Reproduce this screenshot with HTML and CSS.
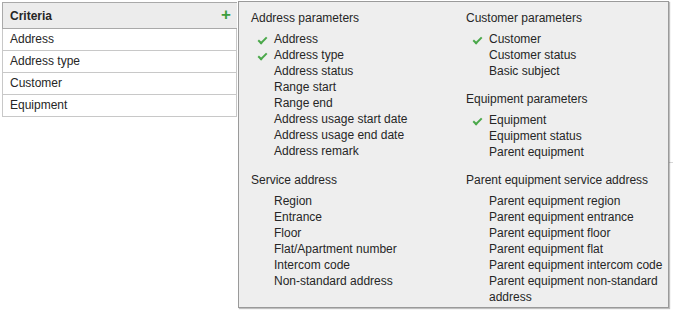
FILE: index.html
```html
<!DOCTYPE html>
<html lang="en">
<head>
  <title>Criteria</title>
  <link rel="stylesheet" href="styles.css">
</head>
<body>

<div class="criteria">
  <div class="criteria__head">
    <span>Criteria</span>
    <span class="add">+</span>
  </div>
  <ul class="criteria__list">
    <li>Address</li>
    <li>Address type</li>
    <li>Customer</li>
    <li>Equipment</li>
  </ul>
</div>

<div class="edge"></div>

<div class="picker">
  <div class="picker__col">
    <div class="group">
      <h3>Address parameters</h3>
      <ul>
        <li class="on">Address</li>
        <li class="on">Address type</li>
        <li>Address status</li>
        <li>Range start</li>
        <li>Range end</li>
        <li>Address usage start date</li>
        <li>Address usage end date</li>
        <li>Address remark</li>
      </ul>
    </div>
    <div class="group">
      <h3>Service address</h3>
      <ul>
        <li>Region</li>
        <li>Entrance</li>
        <li>Floor</li>
        <li>Flat/Apartment number</li>
        <li>Intercom code</li>
        <li>Non-standard address</li>
      </ul>
    </div>
  </div>

  <div class="picker__col picker__col--right">
    <div class="group">
      <h3>Customer parameters</h3>
      <ul>
        <li class="on">Customer</li>
        <li>Customer status</li>
        <li>Basic subject</li>
      </ul>
    </div>
    <div class="group">
      <h3>Equipment parameters</h3>
      <ul>
        <li class="on">Equipment</li>
        <li>Equipment status</li>
        <li>Parent equipment</li>
      </ul>
    </div>
    <div class="group">
      <h3>Parent equipment service address</h3>
      <ul>
        <li>Parent equipment region</li>
        <li>Parent equipment entrance</li>
        <li>Parent equipment floor</li>
        <li>Parent equipment flat</li>
        <li>Parent equipment intercom code</li>
        <li>Parent equipment non-standard address</li>
      </ul>
    </div>
  </div>
</div>

</body>
</html>
```

FILE: styles.css
```css
body {
    margin: 0;
    font-family: 'Liberation Sans', Arial, sans-serif;
    font-size: 12px;
    color: #262626;
    background: white;
}

ul {
    list-style-type: none;
    margin: 0;
    padding: 0;
}

.criteria {
    width: 235px;
    margin: 2px 0 0 2px;
}

.criteria__head {
    display: flex;
    justify-content: space-between;
    align-items: center;
    height: 25px;
    padding: 0 6px 0 7px;
    background-color: #ececec;
    border: 1px solid #a9a9a9;
    border-right: none;
    font-weight: bold;
}

.add {
    color: #3d9e3d;
    font-size: 17px;
    font-weight: bold;
    line-height: 1;
    margin-top: -2px;
}

.criteria__list li {
    height: 21px;
    line-height: 21px;
    padding-left: 7px;
    border: 1px solid #c8c8c8;
    border-top: none;
}

/* bit of the panel underneath, peeking out on the right */
.edge {
    position: absolute;
    left: 669px;
    top: 162px;
    width: 4px;
    height: 1px;
    background: #d6d6d6;
}

.picker {
    position: absolute;
    left: 238px;
    top: 1px;
    width: 417px;
    height: 297px;
    padding: 8px 0 0 12px;
    display: flex;
    background-color: #eeeeee;
    border: 1px solid #9a9a9a;
    box-shadow: 1px 1px 1px rgba(0, 0, 0, 0.25);
}

.picker__col {
    flex: 0 0 215px;
}

.picker__col--right {
    flex: 1 1 auto;
}

.group {
    margin-bottom: 13px;
}

.picker__col--right .group {
    margin-bottom: 12px;
}

.group h3 {
    margin: 0 0 5px;
    font-size: 12px;
    font-weight: normal;
    line-height: 16px;
}

.group li {
    position: relative;
    line-height: 16px;
    padding-left: 23px;
}

.group li.on::before {
    content: '';
    position: absolute;
    left: 9px;
    top: 4px;
    width: 3px;
    height: 7px;
    border: solid #4aa84a;
    border-width: 0 2px 2px 0;
    transform: rotate(45deg);
}
```
